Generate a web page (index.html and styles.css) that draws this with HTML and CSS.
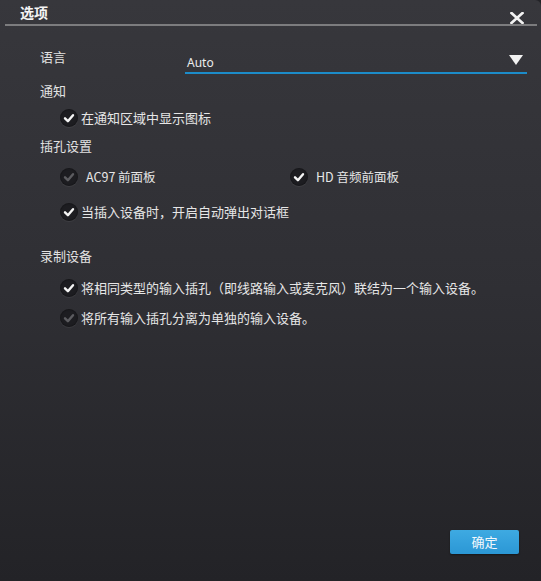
FILE: index.html
```html
<!DOCTYPE html>
<html lang="zh-CN">
<head>
<meta charset="utf-8">
<title>选项</title>
<link rel="stylesheet" href="styles.css">
</head>
<body>
<div class="window">
  <header class="titlebar">
    <span class="title">选项</span>
    <svg class="close" width="14" height="12" viewBox="0 0 14 12" aria-label="关闭">
      <path d="M1.5 1 L12.5 11 M12.5 1 L1.5 11" stroke="#f2f2f2" stroke-width="2.6" stroke-linecap="square" fill="none"/>
    </svg>
  </header>

  <main class="content">
    <div class="lang-row">
      <span class="label">语言</span>
      <div class="dropdown">
        <span class="value">Auto</span>
        <svg class="arrow" width="14" height="10" viewBox="0 0 14 10"><path d="M0 0 H14 L7 10 Z" fill="#f2f2f2"/></svg>
      </div>
    </div>

    <div class="label sec-notify">通知</div>
    <label class="check row-notify"><span class="box"><svg viewBox="0 0 18 18"><path d="M5 9.3 L7.9 12.2 L13 6.2" /></svg></span><span class="text">在通知区域中显示图标</span></label>

    <div class="label sec-jack">插孔设置</div>
    <div class="pair row-ac97">
      <label class="check disabled wide"><span class="box"><svg viewBox="0 0 18 18"><path d="M5 9.3 L7.9 12.2 L13 6.2" /></svg></span><span class="text">AC97 前面板</span></label>
      <label class="check wide"><span class="box"><svg viewBox="0 0 18 18"><path d="M5 9.3 L7.9 12.2 L13 6.2" /></svg></span><span class="text">HD 音频前面板</span></label>
    </div>
    <label class="check row-popup"><span class="box"><svg viewBox="0 0 18 18"><path d="M5 9.3 L7.9 12.2 L13 6.2" /></svg></span><span class="text">当插入设备时，开启自动弹出对话框</span></label>

    <div class="label sec-rec">录制设备</div>
    <label class="check row-rec1"><span class="box"><svg viewBox="0 0 18 18"><path d="M5 9.3 L7.9 12.2 L13 6.2" /></svg></span><span class="text">将相同类型的输入插孔（即线路输入或麦克风）联结为一个输入设备。</span></label>
    <label class="check disabled row-rec2"><span class="box"><svg viewBox="0 0 18 18"><path d="M5 9.3 L7.9 12.2 L13 6.2" /></svg></span><span class="text">将所有输入插孔分离为单独的输入设备。</span></label>
  </main>

  <footer class="footer">
    <button class="ok">确定</button>
  </footer>
</div>
</body>
</html>
```

FILE: styles.css
```css
html, body {
  margin: 0;
  padding: 0;
  width: 541px;
  height: 581px;
  overflow: hidden;
  background: #232327;
}

.window {
  width: 541px;
  height: 581px;
  box-sizing: border-box;
  display: flex;
  flex-direction: column;
  background: linear-gradient(to bottom, #37373c 0%, #2f2f34 50%, #232327 100%);
  font-family: "Noto Sans CJK SC", "Noto Sans", "Liberation Sans", sans-serif;
  font-size: 13px;
  color: #e6e6e6;
  border-top-right-radius: 6px;
}

.titlebar {
  height: 24px;
  margin: 0 4px 0 5px;
  padding: 0 15px 0 15px;
  display: flex;
  align-items: flex-end;
  justify-content: space-between;
  border-bottom: 2px solid #7c7c7e;
}

.title {
  font-size: 14px;
  font-weight: bold;
  color: #f4f4f4;
  line-height: 18px;
  margin-bottom: 3px;
}

.close {
  display: block;
  margin-bottom: 0;
  margin-right: -2px;
}

.content {
  padding: 0 14px 0 40px;
  display: flex;
  flex-direction: column;
}

.label {
  line-height: 18px;
  height: 18px;
  color: #e2e2e2;
}

.lang-row {
  display: grid;
  grid-template-columns: 145px 1fr;
  align-items: start;
}

.lang-row .label {
  margin-top: 22px;
}

.dropdown {
  margin-top: 28px;
  height: 18px;
  padding: 0 4px 0 2px;
  border-bottom: 2px solid #1c8cc9;
  display: flex;
  align-items: center;
  justify-content: space-between;
}

.dropdown .value {
  font-family: "Noto Sans", "Liberation Sans", sans-serif;
  font-size: 12px;
  line-height: 18px;
  color: #ececec;
}

.arrow {
  display: block;
  margin-top: -6px;
}

.check {
  display: flex;
  align-items: center;
  height: 22px;
  padding-left: 20px;
}

.box {
  width: 18px;
  height: 18px;
  border-radius: 50%;
  background: #1d1d21;
  box-shadow: 0 1px 1px rgba(255, 255, 255, 0.07), inset 0 0 2px rgba(0, 0, 0, 0.6);
  flex: none;
}

.box svg {
  display: block;
  width: 18px;
  height: 18px;
}

.box path {
  fill: none;
  stroke: #f4f4f4;
  stroke-width: 2.4;
  stroke-linecap: round;
  stroke-linejoin: round;
}

.check.disabled .box path {
  stroke: #5c5c60;
}

.check .text {
  margin-left: 3px;
  line-height: 18px;
  white-space: nowrap;
}

.check.wide .text {
  margin-left: 8px;
  font-size: 12.5px;
}

.pair {
  display: grid;
  grid-template-columns: 250px 1fr;
}

.pair .check + .check {
  padding-left: 0;
}

.sec-notify { margin-top: 8px; }
.row-notify { margin-top: 7px; }
.sec-jack { margin-top: 8px; }
.row-ac97 { margin-top: 11px; }
.row-popup { margin-top: 13px; }
.sec-rec { margin-top: 24px; }
.row-rec1 { margin-top: 12px; }
.row-rec2 { margin-top: 8px; }

.footer {
  margin-top: auto;
  display: flex;
  justify-content: flex-end;
  padding: 0 22px 27px 0;
}

.ok {
  width: 69px;
  height: 24px;
  border: none;
  border-radius: 2px;
  background: linear-gradient(to bottom, #3eaae2 0%, #2b97d5 100%);
  color: #f4f8fc;
  font-family: "Noto Sans CJK SC", sans-serif;
  font-size: 13px;
  line-height: 24px;
  padding: 0;
  box-shadow: 0 1px 2px rgba(0, 0, 0, 0.4);
}
```
